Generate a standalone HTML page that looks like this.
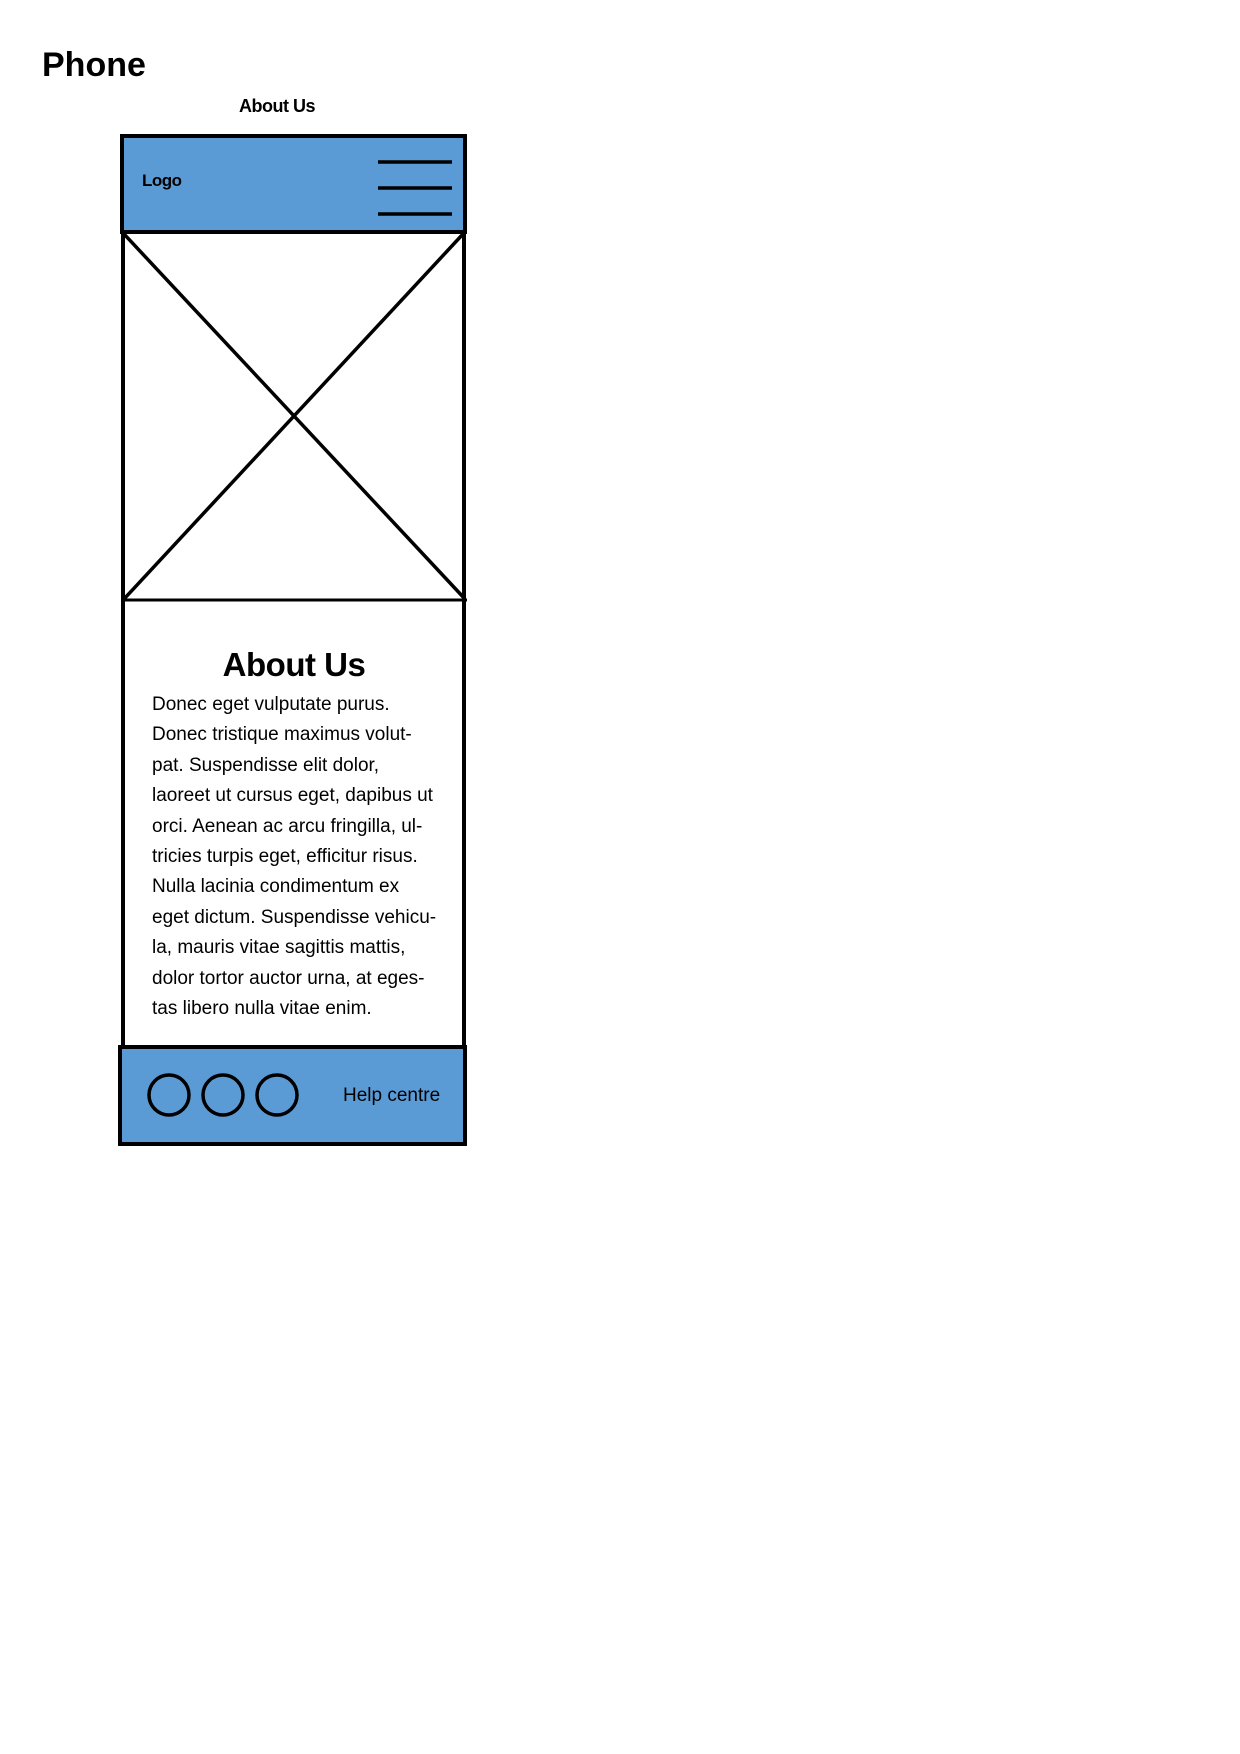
<!DOCTYPE html>
<html><head><meta charset="utf-8"><style>
body{margin:0;width:1240px;height:1754px;background:#fff;position:relative;overflow:hidden;font-family:"Liberation Sans",sans-serif;color:#000}
.t{position:absolute;white-space:nowrap}
svg{position:absolute;left:0;top:0}
.p{position:absolute;left:152px;font-size:19px;letter-spacing:0px;white-space:nowrap;line-height:30.4px}
</style></head><body>
<svg width="1240" height="1754">
<rect x="122" y="136" width="343" height="96" fill="#5B9BD5" stroke="#000" stroke-width="4"/>
<line x1="378" y1="162" x2="452" y2="162" stroke="#000" stroke-width="3.5"/>
<line x1="378" y1="188" x2="452" y2="188" stroke="#000" stroke-width="3.5"/>
<line x1="378" y1="214" x2="452" y2="214" stroke="#000" stroke-width="3.5"/>
<line x1="123" y1="233" x2="123" y2="1047" stroke="#000" stroke-width="4"/>
<line x1="464" y1="233" x2="464" y2="1047" stroke="#000" stroke-width="4"/>
<line x1="122" y1="600" x2="467" y2="600" stroke="#000" stroke-width="3"/>
<line x1="124" y1="234" x2="465" y2="599" stroke="#000" stroke-width="3.5"/>
<line x1="463" y1="234" x2="124" y2="599" stroke="#000" stroke-width="3.5"/>
<rect x="120" y="1047" width="345" height="97" fill="#5B9BD5" stroke="#000" stroke-width="4"/>
<circle cx="169" cy="1095" r="20" fill="none" stroke="#000" stroke-width="3.5"/>
<circle cx="223" cy="1095" r="20" fill="none" stroke="#000" stroke-width="3.5"/>
<circle cx="277" cy="1095" r="20" fill="none" stroke="#000" stroke-width="3.5"/>
</svg>
<div class="t" style="left:42px;top:46px;font-size:34px;font-weight:bold">Phone</div>
<div class="t" style="left:239px;top:96px;font-size:18px;font-weight:bold;letter-spacing:-0.5px">About Us</div>
<div class="t" style="left:142px;top:171px;font-size:17px;font-weight:bold;letter-spacing:-0.5px">Logo</div>
<div class="t" style="left:0;width:588px;text-align:center;top:646px;font-size:33px;font-weight:bold;letter-spacing:-0.5px">About Us</div>
<div class="p" style="top:690px">Donec eget vulputate purus.<br>Donec tristique maximus volut-<br>pat. Suspendisse elit dolor,<br>laoreet ut cursus eget, dapibus ut<br>orci. Aenean ac arcu fringilla, ul-<br>tricies turpis eget, efficitur risus.<br>Nulla lacinia condimentum ex<br>eget dictum. Suspendisse vehicu-<br>la, mauris vitae sagittis mattis,<br>dolor tortor auctor urna, at eges-<br>tas libero nulla vitae enim.</div>
<div class="t" style="left:343px;top:1085px;font-size:19px">Help centre</div>
</body></html>
